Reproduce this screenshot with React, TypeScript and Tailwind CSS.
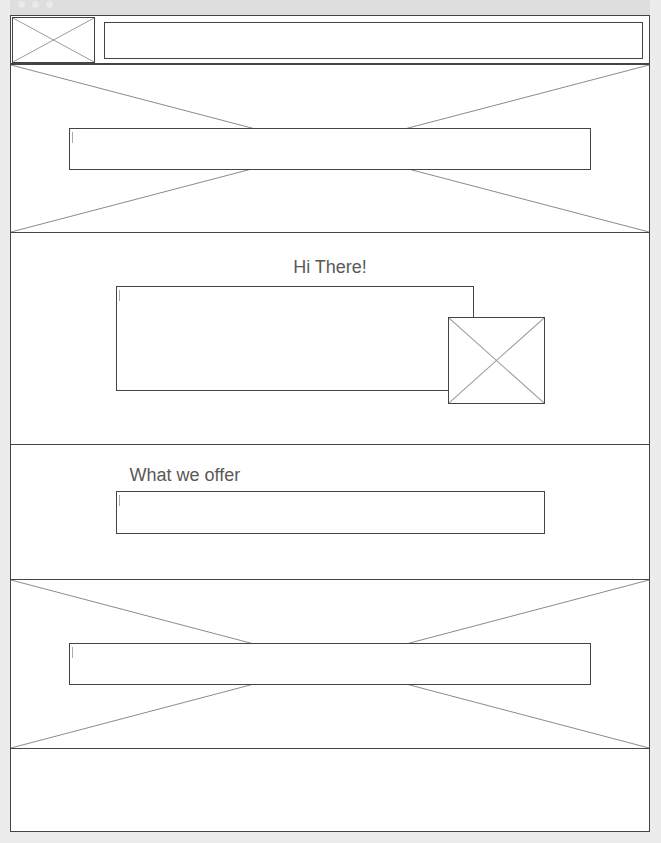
import React from "react";

function CrossLines({ stroke = "#9a9a9a" }: { stroke?: string }) {
	return (
		<svg
			className="absolute inset-0 w-full h-full pointer-events-none"
			viewBox="0 0 100 100"
			preserveAspectRatio="none"
		>
			<line x1="0" y1="0" x2="100" y2="100" stroke={stroke} strokeWidth="1" vectorEffect="non-scaling-stroke" />
			<line x1="100" y1="0" x2="0" y2="100" stroke={stroke} strokeWidth="1" vectorEffect="non-scaling-stroke" />
		</svg>
	);
}

function TextBox({ className }: { className: string }) {
	return (
		<div className={`relative bg-white border border-[#444] ${className}`}>
			<div className="absolute left-[2px] top-[3px] w-px h-[11px] bg-[#aaa]" />
		</div>
	);
}

export default function App() {
	return (
		<div className="min-h-[843px] bg-[#ececec] font-['Liberation_Sans',Arial,sans-serif]">
			{/* Browser chrome */}
			<div className="ml-[10px] w-[640px] h-[15px] bg-[#dedede] flex gap-[7px] pl-[8px] pt-px">
				<span className="w-[7px] h-[7px] rounded-full bg-[#e9e9e9]" />
				<span className="w-[7px] h-[7px] rounded-full bg-[#e9e9e9]" />
				<span className="w-[7px] h-[7px] rounded-full bg-[#e9e9e9]" />
			</div>

			<div className="ml-[10px] w-[640px] border border-[#444] bg-white flex flex-col">
				{/* Header */}
				<header className="h-[49px] flex items-start border-b-2 border-[#444] pt-px pl-px">
					<div className="relative w-[83px] h-[46px] border border-[#444]">
						<CrossLines />
					</div>
					<div className="ml-[9px] mt-[5px] w-[539px] h-[37px] border border-[#444]" />
				</header>

				{/* Hero */}
				<section className="relative h-[168px] border-b border-[#444] flex items-center justify-center">
					<CrossLines stroke="#8a8a8a" />
					<TextBox className="w-[522px] h-[42px]" />
				</section>

				{/* Hi There */}
				<section className="h-[212px] border-b border-[#444] flex flex-col items-center pt-[24px]">
					<h2 className="text-[18px] leading-[21px] text-[#595959]">Hi There!</h2>
					<div className="relative w-[429px] mt-[8px] h-[118px]">
						<TextBox className="w-[358px] h-[105px]" />
						<div className="absolute left-[332px] top-[31px] w-[97px] h-[87px] bg-white border border-[#444]">
							<CrossLines />
						</div>
					</div>
				</section>

				{/* What we offer */}
				<section className="h-[135px] border-b border-[#444] flex flex-col items-center pt-[20px]">
					<div className="w-[429px]">
						<h2 className="pl-[14px] text-[18px] leading-[21px] text-[#595959]">What we offer</h2>
						<TextBox className="mt-[5px] w-[429px] h-[43px]" />
					</div>
				</section>

				{/* Banner */}
				<section className="relative h-[169px] border-b border-[#444] flex items-center justify-center">
					<CrossLines stroke="#8a8a8a" />
					<TextBox className="w-[522px] h-[42px]" />
				</section>

				{/* Footer */}
				<footer className="h-[82px]" />
			</div>
		</div>
	);
}
